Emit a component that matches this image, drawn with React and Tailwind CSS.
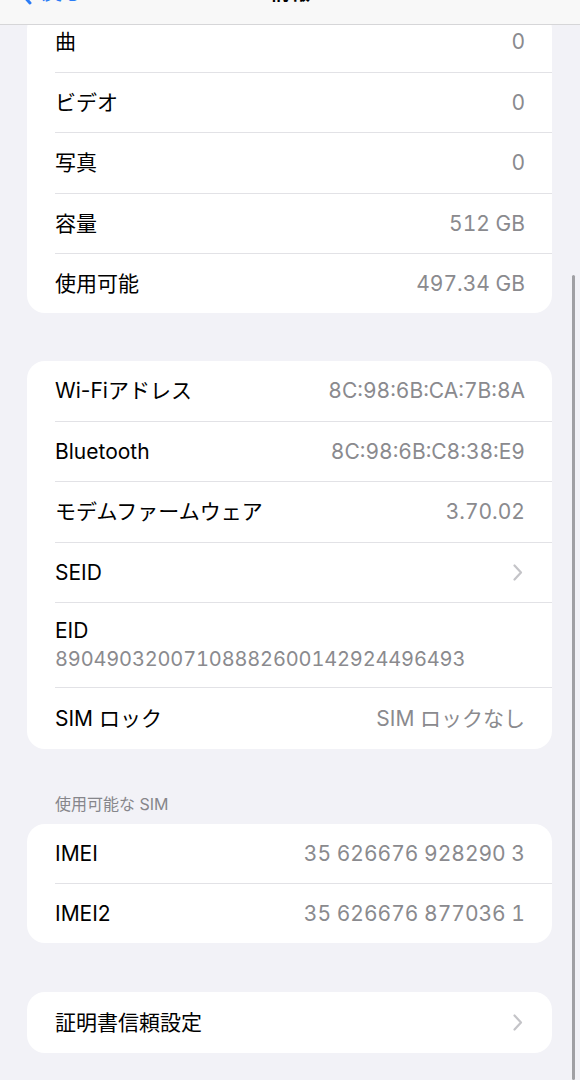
import React from "react";

const font = { fontFamily: '"Inter", "Noto Sans CJK JP", sans-serif' };

function Chevron() {
  return (
    <svg width="10" height="17" viewBox="0 0 10 17" fill="none">
      <path d="M1.5 1.5 L8 8.5 L1.5 15.5" stroke="#c4c4c8" strokeWidth="2.2" strokeLinecap="round" strokeLinejoin="round" />
    </svg>
  );
}

function Row({ label, value, chevron, last, h = "h-[60.5px]" }) {
  return (
    <div className="pl-[28px]">
      <div className={`${h} flex items-center justify-between pr-[27px] ${last ? "" : "border-b border-[#e2e2e6]"}`}>
        <span className="text-[21px] text-black">{label}</span>
        {chevron ? (
          <span className="mr-[2px]"><Chevron /></span>
        ) : (
          <span className="text-[21px] text-[#8a8a8e] tabular-nums">{value}</span>
        )}
      </div>
    </div>
  );
}

function Card({ children, className = "" }) {
  return <div className={`bg-white rounded-[18px] overflow-hidden ${className}`}>{children}</div>;
}

export default function App() {
  return (
    <div className="relative w-[580px] h-[1080px] bg-[#f2f2f7] overflow-hidden" style={font}>
      <div className="pt-[11px] pl-[27px] pr-[28px]">
        <Card>
          <div className="pt-[1px]" />
          <Row label="曲" value="0" />
          <Row label="ビデオ" value="0" />
          <Row label="写真" value="0" />
          <Row label="容量" value="512 GB" />
          <Row label="使用可能" value="497.34 GB" last h="h-[59px]" />
        </Card>

        <Card className="mt-[48px]">
          <Row label="Wi-Fiアドレス" value="8C:98:6B:CA:7B:8A" />
          <Row label="Bluetooth" value="8C:98:6B:C8:38:E9" />
          <Row label="モデムファームウェア" value="3.70.02" />
          <Row label="SEID" chevron />
          <div className="pl-[28px]">
            <div className="h-[85px] border-b border-[#e2e2e6] pr-[27px] flex flex-col justify-center pt-[2px]">
              <span className="text-[21px] text-black leading-[26px]">EID</span>
              <span className="text-[20px] text-[#8a8a8e] leading-[30px] tabular-nums tracking-[-0.15px]">89049032007108882600142924496493</span>
            </div>
          </div>
          <Row label="SIM ロック" value="SIM ロックなし" last />
        </Card>

        <div className="mt-[45px] pl-[28px] text-[16px] text-[#86868b] leading-[20px]">使用可能な SIM</div>

        <Card className="mt-[10px]">
          <Row label="IMEI" value="35 626676 928290 3" />
          <Row label="IMEI2" value="35 626676 877036 1" last h="h-[59px]" />
        </Card>

        <Card className="mt-[49px]">
          <Row label="証明書信頼設定" chevron last />
        </Card>
      </div>

      <div className="absolute top-0 left-0 right-0 h-[25px] bg-[#f8f8f8] border-b border-[#d6d6d8] overflow-hidden flex items-end pb-[19px]">
        <div className="relative w-full flex items-end justify-center">
          <div className="absolute left-[18px] bottom-0 flex items-end text-[#2b7cf6]">
            <svg width="16" height="26" viewBox="0 0 16 26" fill="none" className="mb-[-2px]">
              <path d="M12 2 L3 12 L12 22" stroke="#2b7cf6" strokeWidth="3" strokeLinecap="round" strokeLinejoin="round" />
            </svg>
            <span className="ml-[8px] text-[20px] leading-[24px]">戻る</span>
          </div>
          <span className="text-[20px] font-semibold leading-[24px] text-black">情報</span>
        </div>
      </div>

      <div className="absolute right-[5px] top-[275px] bottom-0 w-[3px] rounded-full bg-[#a0a0a4]" />
    </div>
  );
}
